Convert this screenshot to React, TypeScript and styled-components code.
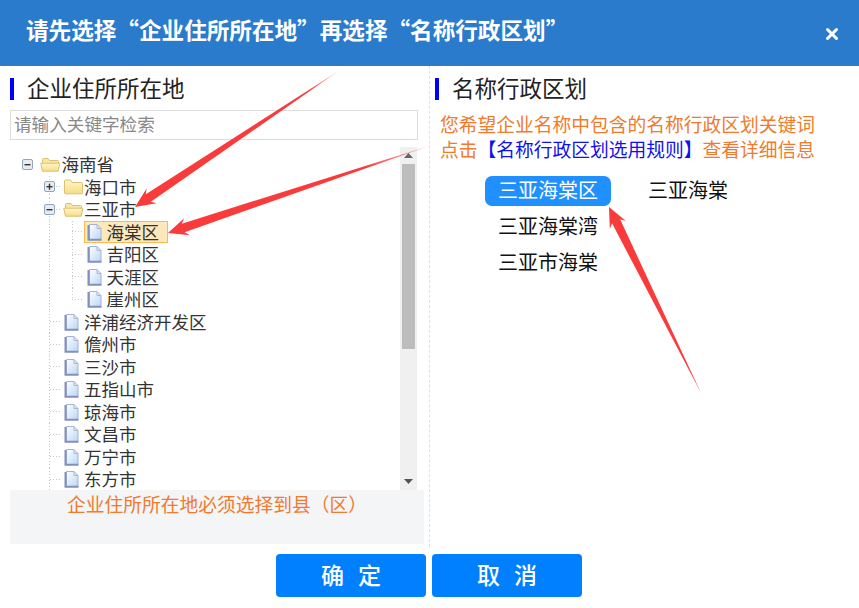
import React from 'react';
import styled, { createGlobalStyle, css } from 'styled-components';
import { X } from 'lucide-react';

const GlobalStyle = createGlobalStyle`
  html, body {
    margin: 0;
    padding: 0;
    background: #fff;
    font-family: "Noto Sans CJK SC", "Liberation Sans", sans-serif;
  }
`;

const Page = styled.div`
  position: relative;
  width: 859px;
  height: 608px;
  overflow: hidden;
  background: #fff;
`;

const Header = styled.div`
  display: flex;
  justify-content: space-between;
  align-items: center;
  height: 66px;
  padding: 0 18px 6px 26px;
  box-sizing: border-box;
  background: #2b7bcd;
  color: #fff;
`;

const HeaderTitle = styled.div`
  font-size: 22.6px;
  font-weight: 700;
  line-height: 30px;
`;

const CloseIcon = styled(X)`
  margin-top: 8px;
  color: #fff;
`;

const Body = styled.div`
  display: flex;
  height: 481px;
`;

const LeftColumn = styled.div`
  width: 430px;
  padding: 12px 5px 0 10px;
  box-sizing: border-box;
  border-right: 1px dashed #e0e0e0;
`;

const RightColumn = styled.div`
  flex: 1;
  padding: 12px 0 0 5px;
`;

const SectionTitle = styled.div`
  height: 22px;
  padding-left: 13px;
  border-left: 4px solid #0000ff;
  font-size: 22.5px;
  line-height: 19px;
  color: #222;
`;

const SearchInput = styled.input`
  display: block;
  width: 408px;
  height: 30px;
  margin-top: 10px;
  padding: 0 3px 3px;
  box-sizing: border-box;
  border: 1px solid #dcdcdc;
  outline: none;
  font-family: inherit;
  font-size: 17.6px;

  &::placeholder {
    color: #888;
    opacity: 1;
  }
`;

const TreeBox = styled.div`
  display: flex;
  width: 407px;
  height: 343px;
  margin-top: 7px;
`;

const TreeList = styled.div`
  flex: 1;
  padding: 6px 0 0 6px;
  overflow: hidden;
`;

const Row = styled.div`
  display: flex;
  height: 22.5px;
  font-size: 17.5px;
  line-height: 22.5px;
  color: #333;
`;

const vertical = (size: string) => css`
  repeating-linear-gradient(to bottom, #c8c8c8 0 1px, transparent 1px 3px) center top / 1px ${size} no-repeat
`;

const horizontal = css`
  repeating-linear-gradient(to right, #c8c8c8 0 1px, transparent 1px 3px) right center / 50% 1px no-repeat
`;

type GuideKind = 'none' | 'pass' | 'tee' | 'end';

const Guide = styled.span<{ $kind: GuideKind }>`
  display: flex;
  flex: none;
  justify-content: center;
  align-items: center;
  width: 22.5px;
  background: ${({ $kind }) =>
    $kind === 'pass'
      ? vertical('100%')
      : $kind === 'tee'
        ? css`${vertical('100%')}, ${horizontal}`
        : $kind === 'end'
          ? css`${vertical('50%')}, ${horizontal}`
          : 'none'};
`;

const Node = styled.span<{ $selected?: boolean }>`
  display: flex;
  align-items: center;
  padding-right: 8px;
  box-sizing: border-box;
  border: 1px solid ${({ $selected }) => ($selected ? '#ffb951' : 'transparent')};
  background: ${({ $selected }) => ($selected ? '#fde8bb' : 'transparent')};
`;

const NodeIcon = styled.span`
  display: flex;
  flex: none;
  justify-content: center;
  align-items: center;
  width: 22px;
`;

const Scrollbar = styled.div`
  display: flex;
  flex: none;
  flex-direction: column;
  align-items: center;
  width: 17px;
  background: #f0f0f0;
`;

const ScrollButton = styled.div`
  display: flex;
  flex: none;
  justify-content: center;
  align-items: center;
  width: 100%;
  height: 17px;
`;

const ScrollThumb = styled.div`
  width: 13px;
  height: 185px;
  background: #bdbdbd;
`;

const ScrollGap = styled.div`
  flex: 1;
`;

const Note = styled.div`
  width: 414px;
  height: 54px;
  padding-left: 57px;
  box-sizing: border-box;
  background: #f4f5f7;
  font-size: 18.75px;
  line-height: 27px;
  color: #f07a2d;
`;

const Hint = styled.div`
  margin-top: 11px;
  padding-left: 5px;
  font-size: 18.75px;
  line-height: 25px;
  color: #f07a2d;
`;

const RuleLink = styled.span`
  color: #1010f0;
`;

const TagList = styled.div`
  display: flex;
  flex-wrap: wrap;
  gap: 6px 24px;
  width: 270px;
  margin-top: 15px;
  padding-left: 50px;
`;

const Tag = styled.div<{ $active?: boolean }>`
  height: 30px;
  padding: 0 13px;
  border-radius: 7px;
  background: ${({ $active }) => ($active ? '#2090ff' : 'transparent')};
  color: ${({ $active }) => ($active ? '#fff' : '#111')};
  font-size: 20px;
  line-height: 28px;
`;

const Footer = styled.div`
  display: flex;
  justify-content: center;
  gap: 6px;
  margin-top: 7px;
  padding-right: 1px;
`;

const ActionButton = styled.button`
  width: 150px;
  height: 43px;
  padding: 0 0 3px;
  border: 0;
  border-radius: 4px;
  background: #007fff;
  color: #fff;
  font-family: inherit;
  font-size: 23px;
  font-weight: 500;
  letter-spacing: 14px;
  text-indent: 14px;
`;

const ArrowLayer = styled.svg`
  position: absolute;
  inset: 0;
  pointer-events: none;
`;

const SwitchIcon = ({ open }: { open: boolean }) => (
  <svg width="11" height="11" viewBox="0 0 11 11">
    <rect x="0.5" y="0.5" width="10" height="10" rx="1.5" fill="#e8ebf0" stroke="#8fa6c0" />
    <rect x="2.5" y="5" width="6" height="1.4" fill="#333" />
    {!open && <rect x="4.8" y="2.7" width="1.4" height="6" fill="#333" />}
  </svg>
);

const FolderIcon = ({ open }: { open: boolean }) => (
  <svg width="21" height="17" viewBox="0 0 21 17">
    <defs>
      <linearGradient id="folderFill" x1="0" y1="0" x2="0" y2="1">
        <stop offset="0" stopColor="#fff6c8" />
        <stop offset="1" stopColor="#f6dc85" />
      </linearGradient>
    </defs>
    {open ? (
      <>
        <path d="M2.5 14V3.5q0-1 1-1h4.5l1.5 2h8q1 0 1 1V14z" fill="#f8e7a4" stroke="#dcc072" />
        <path d="M.8 7.2h19l-1.6 8H2.4z" fill="url(#folderFill)" stroke="#dcc072" strokeLinejoin="round" />
      </>
    ) : (
      <path
        d="M1.5 15V3q0-1 1-1h5l1.8 2.5h9.2q1 0 1 1V15q0 .8-1 .8h-16q-1 0-1-.8z"
        fill="url(#folderFill)"
        stroke="#dcc072"
      />
    )}
  </svg>
);

const PageIcon = () => (
  <svg width="18" height="18" viewBox="0 0 18 18">
    <defs>
      <linearGradient id="pageFill" x1="0" y1="0" x2="1" y2="1">
        <stop offset="0" stopColor="#fff" />
        <stop offset="1" stopColor="#b9d6f8" />
      </linearGradient>
    </defs>
    <path d="M2.5 1.5h7.5l4 4v11h-11.5z" fill="url(#pageFill)" stroke="#a4b2d6" strokeLinejoin="round" />
    <path d="M1.5 2v14.8h13" fill="none" stroke="#8490bc" strokeWidth="2" />
    <path d="M10 1.5V5.5h4" fill="none" stroke="#a8b6d8" />
  </svg>
);

type Point = [number, number];

// arrow drawn from tail to tip, swept head like a screenshot annotation
const Arrow = ({ id, tail, tip, fade }: { id: string; tail: Point; tip: Point; fade: number }) => {
  const dx = tail[0] - tip[0];
  const dy = tail[1] - tip[1];
  const len = Math.hypot(dx, dy);
  const ux = dx / len;
  const uy = dy / len;
  const at = (along: number, side: number) =>
    `${tip[0] + ux * along - uy * side},${tip[1] + uy * along + ux * side}`;
  const points = [at(0, 0), at(20, 9), at(16, 4.5), `${tail[0]},${tail[1]}`, at(16, -4.5), at(20, -9)].join(' ');
  return (
    <>
      <defs>
        <linearGradient
          id={id}
          gradientUnits="userSpaceOnUse"
          x1={tail[0]}
          y1={tail[1]}
          x2={tail[0] - dx * fade}
          y2={tail[1] - dy * fade}
        >
          <stop offset="0" stopColor="#f93b3b" stopOpacity="0.25" />
          <stop offset="1" stopColor="#f93b3b" />
        </linearGradient>
      </defs>
      <polygon points={points} fill={`url(#${id})`} />
    </>
  );
};

const cities = ['洋浦经济开发区', '儋州市', '三沙市', '五指山市', '琼海市', '文昌市', '万宁市', '东方市'];
const districts = ['海棠区', '吉阳区', '天涯区', '崖州区'];
const tags = ['三亚海棠区', '三亚海棠', '三亚海棠湾', '三亚市海棠'];

export default function App() {
  return (
    <Page>
      <GlobalStyle />
      <Header>
        <HeaderTitle>请先选择“企业住所所在地”再选择“名称行政区划”</HeaderTitle>
        <CloseIcon size={18} strokeWidth={4} />
      </Header>
      <Body>
        <LeftColumn>
          <SectionTitle>企业住所所在地</SectionTitle>
          <SearchInput placeholder="请输入关键字检索" />
          <TreeBox>
            <TreeList>
              <Row>
                <Guide $kind="none">
                  <SwitchIcon open />
                </Guide>
                <Node>
                  <NodeIcon>
                    <FolderIcon open />
                  </NodeIcon>
                  海南省
                </Node>
              </Row>
              <Row>
                <Guide $kind="none" />
                <Guide $kind="tee">
                  <SwitchIcon open={false} />
                </Guide>
                <Node>
                  <NodeIcon>
                    <FolderIcon open={false} />
                  </NodeIcon>
                  海口市
                </Node>
              </Row>
              <Row>
                <Guide $kind="none" />
                <Guide $kind="tee">
                  <SwitchIcon open />
                </Guide>
                <Node>
                  <NodeIcon>
                    <FolderIcon open />
                  </NodeIcon>
                  三亚市
                </Node>
              </Row>
              {districts.map((name, index) => (
                <Row key={name}>
                  <Guide $kind="none" />
                  <Guide $kind="pass" />
                  <Guide $kind={index === districts.length - 1 ? 'end' : 'tee'} />
                  <Node $selected={index === 0}>
                    <NodeIcon>
                      <PageIcon />
                    </NodeIcon>
                    {name}
                  </Node>
                </Row>
              ))}
              {cities.map((name) => (
                <Row key={name}>
                  <Guide $kind="none" />
                  <Guide $kind="tee" />
                  <Node>
                    <NodeIcon>
                      <PageIcon />
                    </NodeIcon>
                    {name}
                  </Node>
                </Row>
              ))}
            </TreeList>
            <Scrollbar>
              <ScrollButton>
                <svg width="9" height="5" viewBox="0 0 9 5">
                  <path d="M4.5 0L9 5H0z" fill="#666" />
                </svg>
              </ScrollButton>
              <ScrollThumb />
              <ScrollGap />
              <ScrollButton>
                <svg width="9" height="5" viewBox="0 0 9 5">
                  <path d="M0 0h9L4.5 5z" fill="#555" />
                </svg>
              </ScrollButton>
            </Scrollbar>
          </TreeBox>
          <Note>企业住所所在地必须选择到县（区）</Note>
        </LeftColumn>
        <RightColumn>
          <SectionTitle>名称行政区划</SectionTitle>
          <Hint>
            您希望企业名称中包含的名称行政区划关键词
            <br />
            点击<RuleLink>【名称行政区划选用规则】</RuleLink>查看详细信息
          </Hint>
          <TagList>
            {tags.map((tag, index) => (
              <Tag key={tag} $active={index === 0}>
                {tag}
              </Tag>
            ))}
          </TagList>
        </RightColumn>
      </Body>
      <Footer>
        <ActionButton>确定</ActionButton>
        <ActionButton>取消</ActionButton>
      </Footer>
      <ArrowLayer width="859" height="608" viewBox="0 0 859 608">
        <Arrow id="arrowCity" tail={[340, 70]} tip={[135, 207]} fade={0.15} />
        <Arrow id="arrowDistrict" tail={[432, 145]} tip={[168, 233]} fade={0.25} />
        <Arrow id="arrowTag" tail={[701, 393]} tip={[609, 207]} fade={0.02} />
      </ArrowLayer>
    </Page>
  );
}
